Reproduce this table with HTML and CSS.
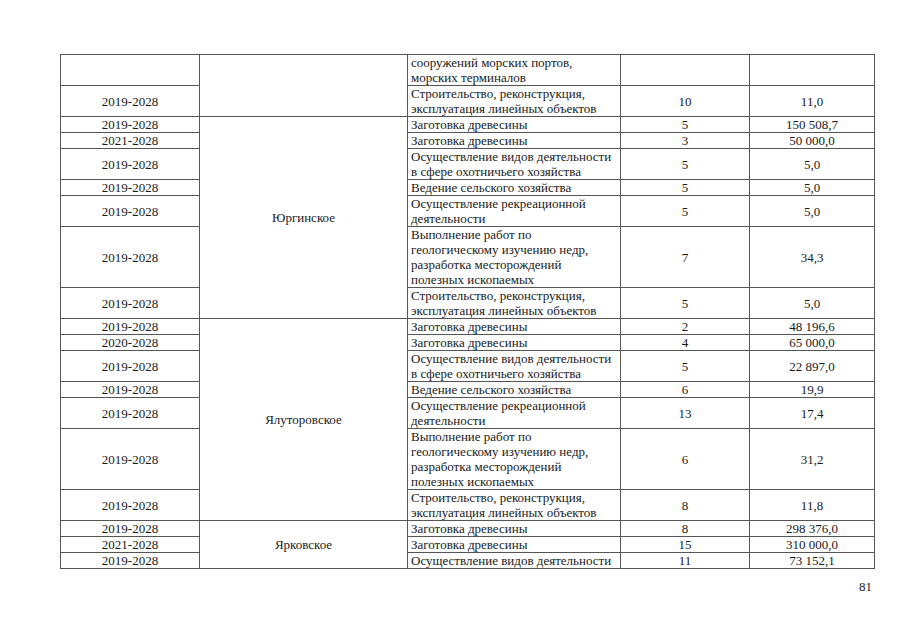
FILE: index.html
```html
<!DOCTYPE html>
<html lang="ru">
<head>
<meta charset="utf-8">
<link rel="stylesheet" href="styles.css">
</head>
<body>
<div class="page">
<table class="grid">
<colgroup>
<col class="c1"><col class="c2"><col class="c3"><col class="c4"><col class="c5">
</colgroup>
<tbody>
<tr><td></td><td rowspan="2"></td><td class="txt">сооружений морских портов,<br>морских терминалов</td><td></td><td></td></tr>
<tr><td>2019-2028</td><td class="txt">Строительство, реконструкция,<br>эксплуатация линейных объектов</td><td>10</td><td>11,0</td></tr>
<tr><td>2019-2028</td><td rowspan="7">Юргинское</td><td class="txt">Заготовка древесины</td><td>5</td><td>150 508,7</td></tr>
<tr><td>2021-2028</td><td class="txt">Заготовка древесины</td><td>3</td><td>50 000,0</td></tr>
<tr><td>2019-2028</td><td class="txt">Осуществление видов деятельности<br>в сфере охотничьего хозяйства</td><td>5</td><td>5,0</td></tr>
<tr><td>2019-2028</td><td class="txt">Ведение сельского хозяйства</td><td>5</td><td>5,0</td></tr>
<tr><td>2019-2028</td><td class="txt">Осуществление рекреационной<br>деятельности</td><td>5</td><td>5,0</td></tr>
<tr><td>2019-2028</td><td class="txt">Выполнение работ по<br>геологическому изучению недр,<br>разработка месторождений<br>полезных ископаемых</td><td>7</td><td>34,3</td></tr>
<tr><td>2019-2028</td><td class="txt">Строительство, реконструкция,<br>эксплуатация линейных объектов</td><td>5</td><td>5,0</td></tr>
<tr><td>2019-2028</td><td rowspan="7">Ялуторовское</td><td class="txt">Заготовка древесины</td><td>2</td><td>48 196,6</td></tr>
<tr><td>2020-2028</td><td class="txt">Заготовка древесины</td><td>4</td><td>65 000,0</td></tr>
<tr><td>2019-2028</td><td class="txt">Осуществление видов деятельности<br>в сфере охотничьего хозяйства</td><td>5</td><td>22 897,0</td></tr>
<tr><td>2019-2028</td><td class="txt">Ведение сельского хозяйства</td><td>6</td><td>19,9</td></tr>
<tr><td>2019-2028</td><td class="txt">Осуществление рекреационной<br>деятельности</td><td>13</td><td>17,4</td></tr>
<tr><td>2019-2028</td><td class="txt">Выполнение работ по<br>геологическому изучению недр,<br>разработка месторождений<br>полезных ископаемых</td><td>6</td><td>31,2</td></tr>
<tr><td>2019-2028</td><td class="txt">Строительство, реконструкция,<br>эксплуатация линейных объектов</td><td>8</td><td>11,8</td></tr>
<tr><td>2019-2028</td><td rowspan="3">Ярковское</td><td class="txt">Заготовка древесины</td><td>8</td><td>298 376,0</td></tr>
<tr><td>2021-2028</td><td class="txt">Заготовка древесины</td><td>15</td><td>310 000,0</td></tr>
<tr><td>2019-2028</td><td class="txt">Осуществление видов деятельности</td><td>11</td><td>73 152,1</td></tr>
</tbody>
</table>
<div class="pagenum">81</div>
</div>
</body>
</html>
```
FILE: styles.css
```css
html, body {
  margin: 0;
  padding: 0;
  background: #fff;
}
.page {
  padding: 54px 32px 0 60px;
  font-family: "Liberation Serif", "Times New Roman", serif;
  font-size: 13px;
  color: #1a1a1a;
}
.grid {
  border-collapse: collapse;
  table-layout: fixed;
  width: 814px;
}
.c1 { width: 139px; }
.c2 { width: 208px; }
.c3 { width: 213px; }
.c4 { width: 129px; }
.c5 { width: 125px; }
.grid td {
  border: 1px solid #555;
  padding: 0 3px;
  line-height: 15px;
  height: 15px;
  text-align: center;
  vertical-align: middle;
  white-space: nowrap;
}
.grid td.txt {
  text-align: left;
}
.pagenum {
  width: 814px;
  text-align: right;
  margin-top: 10px;
  padding-right: 2px;
  box-sizing: border-box;
  line-height: 15px;
}
```
